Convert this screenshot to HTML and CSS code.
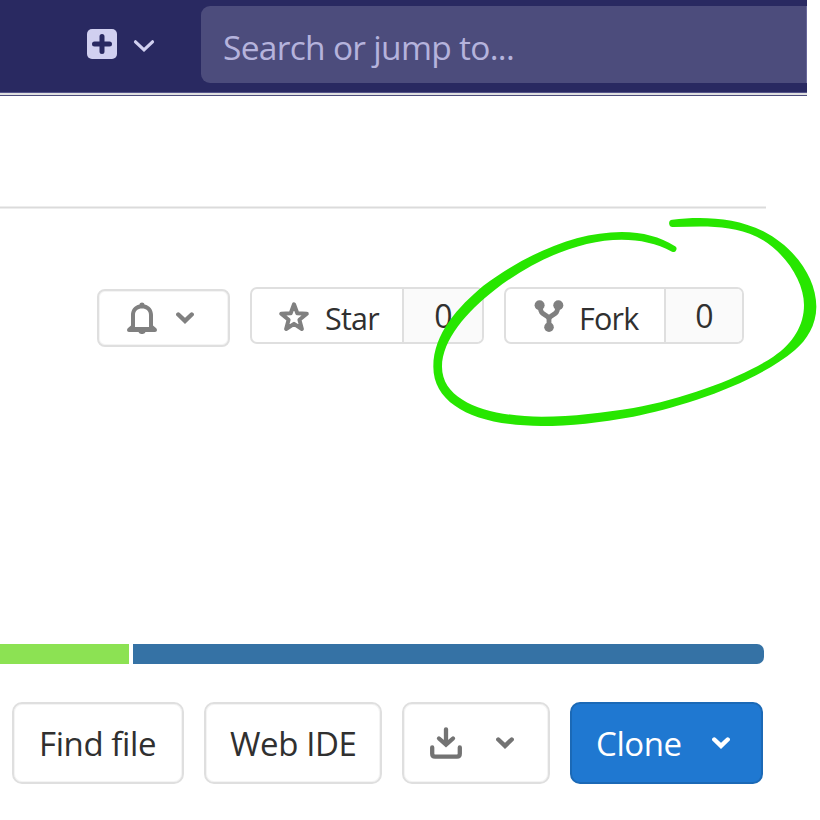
FILE: index.html
```html
<!DOCTYPE html>
<html lang="en">
<head>
<meta charset="utf-8">
<title>Project</title>
<link rel="stylesheet" href="styles.css">
</head>
<body>
<header class="navbar">
  <button class="new-menu" aria-label="Create new">
    <svg width="30" height="30" viewBox="0 0 30 30"><rect width="30" height="30" rx="5" fill="#d1d0f0"/><path d="M15 7.500v15M7.500 15h15" stroke="#292961" stroke-width="5" stroke-linecap="round"/></svg>
    <svg class="new-chevron" width="22" height="14" viewBox="0 0 22 14" fill="none"><path d="M2.500 2.800l8.500 8 8.500-8" stroke="#d1d0f0" stroke-width="3.200" stroke-linecap="round"/></svg>
  </button>
  <div class="search"><span class="search-text">Search or jump to...</span></div>
</header>
<main>
  <div class="divider"></div>
  <div class="project-actions">
    <button class="btn notify" aria-label="Notifications">
      <svg width="30" height="32" viewBox="0 0 30 32"><path fill="#808080" fill-rule="evenodd" d="M12.500 2.400C12.500-.3 17.500-.3 17.500 2.400C23 3.500 26 8 26 13v10.500l3 2.500c1.700 1.500 1 4-1 4h-9.500c-1 2.700-6 2.700-7 0H2c-2 0-2.700-2.500-1-4l3-2.500V13C4 8 7 3.500 12.500 2.400zM8 25h14V13c0-4-2.500-6.500-7-6.500S8 9 8 13z"/></svg>
      <svg width="18" height="12" viewBox="0 0 18 12" fill="none"><path d="M2.300 2.500l6.700 6.400 6.700-6.400" stroke="#808080" stroke-width="4.400" stroke-linecap="round"/></svg>
    </button>
    <div class="btn-group star">
      <button class="group-main">
        <svg width="32" height="31" viewBox="0 0 32 31"><path fill="none" stroke="#808080" stroke-width="4" stroke-linejoin="round" d="M16 3.300l3.300 8.900 9.500.6-7.400 5.900 2.500 9.300-7.900-5.200-7.900 5.200 2.500-9.300-7.400-5.900 9.500-.6z"/></svg>
        <span class="label">Star</span>
      </button>
      <span class="count">0</span>
    </div>
    <div class="btn-group fork">
      <button class="group-main">
        <svg width="30" height="32" viewBox="0 0 30 32"><g fill="#808080"><circle cx="5.600" cy="5.200" r="5"/><circle cx="24.300" cy="5.200" r="5"/><circle cx="15" cy="27.200" r="4.800"/></g><path d="M6.500 6v3c0 7 8.500 5 8.500 10.500V27M23.500 6v3c0 7-8.500 5-8.500 10.500" fill="none" stroke="#808080" stroke-width="4.800"/></svg>
        <span class="label">Fork</span>
      </button>
      <span class="count">0</span>
    </div>
    <svg class="annotation" width="400" height="225" viewBox="0 0 1200 675"><path fill="#27e600" d="M757 29C840 20 940 20 1030 64C1120 110 1189 200 1189 290C1189 345 1160 390 1125 420C1000 525 780 592 640 620C540 638 450 648 365 648C180 648 40 590 40 470C40 370 115 290 190 227C320 130 470 66 605 66C670 66 720 81 764 108a9 9 0 0 1-8 17C710 100 660 89 605 89C480 89 340 150 225 239C140 305 66 390 66 470C66 580 220 620 365 620C460 620 550 608 640 594C800 565 970 500 1060 440C1120 400 1152 345 1152 285C1152 210 1090 120 1010 80C930 43 850 49 760 51a11 11 0 0 1-3-22z"/></svg>
  </div>
  <div class="languages"><span class="lang-green"></span><span class="lang-blue"></span></div>
  <div class="file-actions">
    <button class="btn find"><span class="label">Find file</span></button>
    <button class="btn ide"><span class="label">Web IDE</span></button>
    <button class="btn download" aria-label="Download">
      <svg width="32" height="32" viewBox="0 0 32 32" fill="none"><path d="M2.200 20.500v6.300q0 2.800 2.800 2.800h22q2.800 0 2.800-2.800v-6.300M16 2.300v15M9 11.500l7 6.200 7-6.200" stroke="#737373" stroke-width="4.300" stroke-linecap="round"/></svg>
      <svg width="18" height="12" viewBox="0 0 18 12" fill="none"><path d="M2.300 2.500l6.700 6.400 6.700-6.400" stroke="#737373" stroke-width="4.400" stroke-linecap="round"/></svg>
    </button>
    <button class="btn clone"><span class="label">Clone</span>
      <svg width="18" height="12" viewBox="0 0 18 12" fill="none"><path d="M2.300 2.500l6.700 6.400 6.700-6.400" stroke="#fff" stroke-width="4.400" stroke-linecap="round"/></svg>
    </button>
  </div>
</main>
</body>
</html>
```
FILE: styles.css
```css
* { box-sizing: border-box; }
body { margin: 0; width: 820px; height: 820px; overflow: hidden; background: #fff; color: #303030; font-family: "Open Sans", "Noto Sans", sans-serif; }
button { margin: 0; padding: 0; border: 0; background: none; font: inherit; color: inherit; display: flex; align-items: center; }
svg { display: block; flex: none; }
span { white-space: nowrap; }

.navbar { width: 807px; height: 96px; padding: 6px 0 0 87px; display: flex; align-items: flex-start; background: linear-gradient(#292961 92px, #55558a 92px 93px, #e0e0e0 93px 95px, #4c4c7c 95px); }
.new-menu { width: 114px; height: 76px; gap: 16px; }
.new-chevron { margin-top: 4px; }
.search { flex: 1; height: 77px; padding-left: 22px; display: flex; align-items: center; background: #4c4c7c; border-radius: 9px 0 0 9px; border-right: 1px solid #68679a; }
.search-text { color: #b5b3dc; font-size: 33.500px; line-height: 46px; letter-spacing: -.7px; padding-top: 4px; }

.divider { width: 766px; height: 3px; margin-top: 110px; background: linear-gradient(#ededed 1px, #dbdbdb 1px 2px, #ededed 2px); }
.project-actions { position: relative; display: flex; gap: 20px; height: 60px; margin: 78px 0 0 97px; }
.btn { border: 2px solid #dfdfdf; border-radius: 8px; background: #fff; box-shadow: inset 0 0 0 1px #f4f4f4; }
.notify { width: 133px; height: 58px; margin-top: 2px; padding-left: 28px; gap: 19px; }
.btn-group { display: flex; height: 57px; border: 2px solid #dfdfdf; border-radius: 7px; overflow: hidden; }
.star { width: 234px; }
.fork { width: 240px; }
.group-main { height: 54px; padding-left: 26px; gap: 15px; font-size: 30.500px; letter-spacing: -.8px; }
.star .group-main { width: 150px; }
.fork .group-main { width: 158px; padding-left: 28px; gap: 15px; }
.group-main .label { padding-top: 4px; }
.count { flex: 1; height: 54px; line-height: 53px; padding-left: 1px; text-align: center; font-size: 32px; background: #fafafa; border-left: 2px solid #dfdfdf; }
.annotation { position: absolute; left: 323px; top: -77px; }

.languages { display: flex; gap: 4px; width: 764px; height: 20px; margin-top: 297px; }
.lang-green { width: 129px; background: #8ce253; }
.lang-blue { flex: 1; background: #3572a5; border-radius: 0 7px 7px 0; }
.file-actions { display: flex; gap: 20px; margin: 38px 0 0 12px; }
.file-actions .btn { height: 82px; border-radius: 10px; font-size: 33px; letter-spacing: -.4px; }
.file-actions .clone svg, .download svg { margin-top: 0; }
.find { width: 172px; padding-left: 25px; }
.ide { width: 178px; padding-left: 24px; }
.download { width: 148px; padding-left: 26px; gap: 34px; }
.file-actions .clone { width: 193px; padding-left: 24px; gap: 30px; background: #1f78d1; border-color: #1b69b6; color: #fff; box-shadow: none; }
```
